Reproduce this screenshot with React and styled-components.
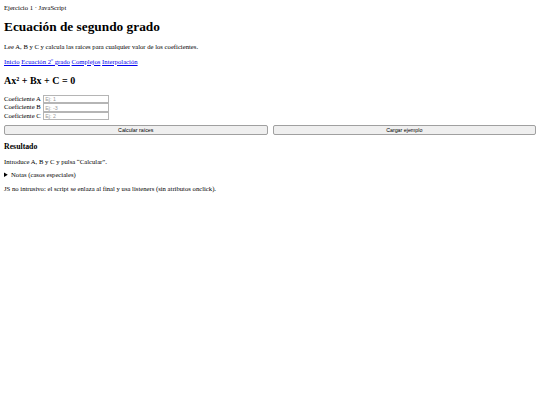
import React from "react";
import styled, { createGlobalStyle } from "styled-components";

const Global = createGlobalStyle`
  html, body { margin: 0; padding: 0; background: #fff; }
  body {
    margin: 4px;
    font-family: "Liberation Serif", "Times New Roman", serif;
    font-size: 6.67px;
    line-height: 1.15;
    color: #000;
  }
`;

const Page = styled.main`
  display: flex;
  flex-direction: column;
`;

const Kicker = styled.div`
  margin: 0;
`;

const Title = styled.h1`
  font-size: 13.33px;
  line-height: 1.15;
  margin: 7.6px 0 8.6px;
  font-weight: bold;
`;

const Para = styled.p`
  margin: 0 0 ${(p) => p.$mb || "7px"};
`;

const Nav = styled.nav`
  display: flex;
  gap: 1.7px;
  margin: 0 0 9.2px;
`;

const Link = styled.a`
  color: #0000ee;
  text-decoration: underline;
`;

const Formula = styled.h2`
  font-size: 10px;
  line-height: 1.15;
  margin: 0 0 8.7px;
  font-weight: bold;
`;

const Fields = styled.div`
  display: flex;
  flex-direction: column;
  gap: 0.35px;
`;

const Row = styled.div`
  display: flex;
  align-items: center;
  gap: 2px;
  height: 8.2px;
`;

const Label = styled.label`
  line-height: 1;
`;

const Input = styled.input`
  width: 66px;
  height: 8.2px;
  box-sizing: border-box;
  border: 1px solid #b5b5b5;
  padding: 0 1.5px;
  margin: 0;
  font-family: "Liberation Sans", Arial, sans-serif;
  font-size: 5.3px;
  outline: none;
  &::placeholder { color: #9a9a9a; }
`;

const Buttons = styled.div`
  display: grid;
  grid-template-columns: 1fr 1fr;
  gap: 5px;
  margin-top: 5px;
`;

const Button = styled.button`
  height: 10px;
  padding: 0;
  border: 1px solid #a0a0a0;
  border-radius: 2px;
  background: #efefef;
  font-family: "Liberation Sans", Arial, sans-serif;
  font-size: 5.3px;
  color: #000;
`;

const Heading = styled.h3`
  font-size: 7.8px;
  line-height: 1.15;
  margin: 7.5px 0 6.7px;
  font-weight: bold;
`;

const Details = styled.details`
  margin: 0 0 6.3px;
  summary { cursor: pointer; }
`;

export default function App() {
  return (
    <>
      <Global />
      <Page>
        <Kicker>Ejercicio 1 · JavaScript</Kicker>
        <Title>Ecuación de segundo grado</Title>
        <Para>Lee A, B y C y calcula las raíces para cualquier valor de los coeficientes.</Para>
        <Nav>
          <Link href="#">Inicio</Link>
          <Link href="#">Ecuación 2º grado</Link>
          <Link href="#">Complejos</Link>
          <Link href="#">Interpolación</Link>
        </Nav>
        <Formula>Ax² + Bx + C = 0</Formula>
        <Fields>
          <Row>
            <Label>Coeficiente A</Label>
            <Input placeholder="Ej: 1" />
          </Row>
          <Row>
            <Label>Coeficiente B</Label>
            <Input placeholder="Ej: -3" />
          </Row>
          <Row>
            <Label>Coeficiente C</Label>
            <Input placeholder="Ej: 2" />
          </Row>
        </Fields>
        <Buttons>
          <Button>Calcular raíces</Button>
          <Button>Cargar ejemplo</Button>
        </Buttons>
        <Heading>Resultado</Heading>
        <Para $mb="5.3px">Introduce A, B y C y pulsa “Calcular”.</Para>
        <Details>
          <summary>Notas (casos especiales)</summary>
        </Details>
        <Para>JS no intrusivo: el script se enlaza al final y usa listeners (sin atributos onclick).</Para>
      </Page>
    </>
  );
}
